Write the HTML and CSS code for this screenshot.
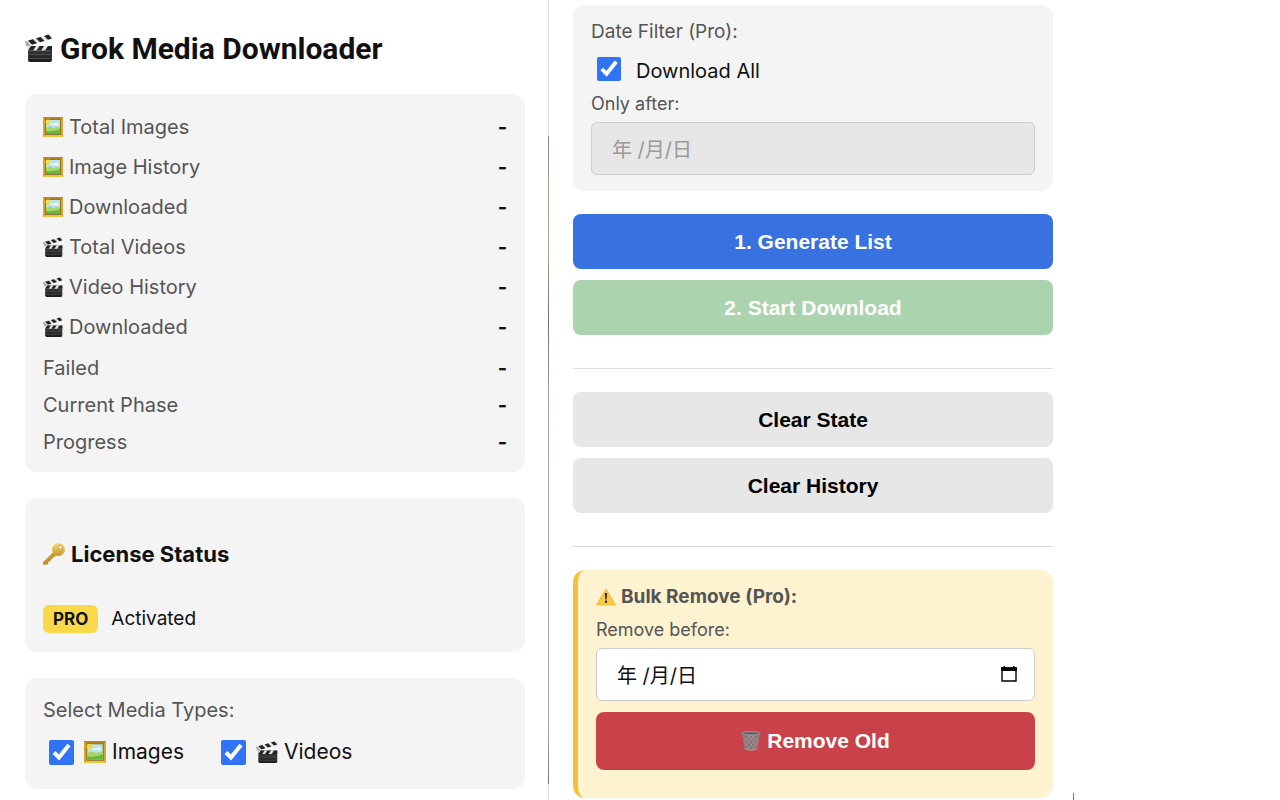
FILE: index.html
```html
<!DOCTYPE html>
<html lang="en">
<head>
  <meta charset="UTF-8">
  <title>Grok Media Downloader</title>
  <link rel="stylesheet" href="styles.css">
</head>
<body>
  <!-- shared icons -->
  <svg class="sprite" aria-hidden="true">
    <defs>
      <linearGradient id="gold" x1="0" y1="0" x2="0" y2="1">
        <stop offset="0" stop-color="#f6dc6a"/>
        <stop offset="1" stop-color="#c99a2c"/>
      </linearGradient>
      <linearGradient id="slate" x1="0" y1="0" x2="0" y2="1">
        <stop offset="0" stop-color="#444"/>
        <stop offset="1" stop-color="#1c1c1c"/>
      </linearGradient>
    </defs>
    <symbol id="clapper" viewBox="0 0 28 28">
      <path d="M0 7.500 25.500 0 27 4.500 1.500 12.500z" fill="#e4e4e4"/>
      <path d="M3 6.600 8 5.200 12 9.200 7 10.800zM11 4.300 15.500 3 19.500 6.900 15 8.300zM19 2 23.500 .6 27 4.500 23 5.800z" fill="#222"/>
      <path d="M0 7.500 2 7 5.500 12 1.500 12.500z" fill="#aaa"/>
      <path d="M3 12H27V26Q27 28 25 28H5Q3 28 3 26z" fill="url(#slate)"/>
      <path d="M3 12H27L25.500 16.500H3z" fill="#e4e4e4"/>
      <path d="M6 12H11L8 16.500H3zM14.500 12H19L16 16.500H11.500zM23 12H27V16.500H20z" fill="#222"/>
      <path d="M3 20.500H27M3 24.500H27" stroke="#5a5a5a" stroke-width=".7"/>
    </symbol>
    <symbol id="frame" viewBox="0 0 20 20">
      <path d="M0 0H20V20H0z" fill="#dba520"/>
      <path d="M0 0H20L17.500 2.500H2.500z" fill="#b98222"/>
      <path d="M0 20H20L17.500 17.500H2.500z" fill="#f0c63a"/>
      <path d="M2 2H18V18H2z" fill="#8b7437"/>
      <path d="M3 3H17V17H3z" fill="#bce4ed"/>
      <circle cx="5" cy="5" r="2.500" fill="#f4dc3e"/>
      <path d="M7 8Q9 5.500 11 7.500 14 5 16 8z" fill="#fff"/>
      <path d="M3 11Q7 8 11 11 14 9 17 10V17H3z" fill="#a6d66c"/>
      <path d="M3 14Q11 15 17 12V17H3z" fill="#69b83e"/>
    </symbol>
    <symbol id="key" viewBox="0 0 22 22">
      <path d="M10.500 9 13.500 12 5 19.500 4.500 21.500 2 22 0 21.500V19z" fill="#c79a31"/>
      <path d="M3 18.500 5 20.500M5.500 16.500 7.500 18.500" stroke="#916b1d" stroke-width="1"/>
      <circle cx="15.500" cy="6.500" r="6.400" fill="url(#gold)"/>
      <circle cx="17.500" cy="4.300" r="1.900" fill="#f4f4f4" stroke="#a98329" stroke-width=".6"/>
    </symbol>
    <symbol id="warning" viewBox="0 0 20 17">
      <path d="M10 .8 19.200 16.200H.8z" fill="#f8cc46" stroke="#f0bd35" stroke-width="1.200" stroke-linejoin="round"/>
      <path d="M8.900 4.500H11.100L10.600 11H9.400z" fill="#222"/>
      <circle cx="10" cy="13.300" r="1.200" fill="#222"/>
    </symbol>
    <symbol id="trash" viewBox="0 0 20 20">
      <path d="M1 2H19L16.500 18Q10 20.500 3.500 18z" fill="#85777a"/>
      <path d="M2 5 14.500 19M6 4 16.500 15M10 4 17.500 11M2.500 10 9 19M18 5 5.500 19M14 4 3.500 15M10 4 2.500 11M17.500 10 11 19" stroke="#b5969a" stroke-width=".7" fill="none"/>
      <ellipse cx="10" cy="2.300" rx="9.500" ry="1.800" fill="#666" stroke="#a5a0a0" stroke-width=".8"/>
      <path d="M3.500 18Q10 20.500 16.500 18" fill="none" stroke="#9d9a9a"/>
    </symbol>
    <symbol id="calendar" viewBox="0 0 16 16">
      <path d="M1 2H15V15H1z" fill="none" stroke="#000" stroke-width="1.400"/>
      <path d="M.2 1.200H15.800V5H.2zM2.500 0H4V2H2.500zM12 0H13.500V2H12z"/>
    </symbol>
  </svg>

  <main class="layout">
    <div class="panel panel-left">
      <h1><svg class="icon-lg"><use href="#clapper"/></svg>Grok Media Downloader</h1>

      <section class="card stats">
        <div class="group">
          <div class="stat"><span><svg class="icon"><use href="#frame"/></svg>Total Images</span><b>-</b></div>
          <div class="stat"><span><svg class="icon"><use href="#frame"/></svg>Image History</span><b>-</b></div>
          <div class="stat"><span><svg class="icon"><use href="#frame"/></svg>Downloaded</span><b>-</b></div>
          <div class="stat"><span><svg class="icon"><use href="#clapper"/></svg>Total Videos</span><b>-</b></div>
          <div class="stat"><span><svg class="icon"><use href="#clapper"/></svg>Video History</span><b>-</b></div>
          <div class="stat"><span><svg class="icon"><use href="#clapper"/></svg>Downloaded</span><b>-</b></div>
        </div>
        <div class="group compact">
          <div class="stat"><span>Failed</span><b>-</b></div>
          <div class="stat"><span>Current Phase</span><b>-</b></div>
          <div class="stat"><span>Progress</span><b>-</b></div>
        </div>
      </section>

      <section class="card license">
        <h2><svg class="icon-md"><use href="#key"/></svg>License Status</h2>
        <div class="status"><span class="badge">PRO</span><span>Activated</span></div>
      </section>

      <section class="card media">
        <div class="media-title">Select Media Types:</div>
        <div class="checks">
          <label><input type="checkbox" class="check" checked><svg class="icon-md"><use href="#frame"/></svg>Images</label>
          <label><input type="checkbox" class="check" checked><svg class="icon-md"><use href="#clapper"/></svg>Videos</label>
        </div>
      </section>
    </div>

    <div class="panel panel-right">
      <section class="card filter">
        <div class="field-label filter-title">Date Filter (Pro):</div>
        <label class="all"><input type="checkbox" class="check" checked><span>Download All</span></label>
        <label class="field-label" for="after">Only after:</label>
        <div class="date"><input type="text" id="after" value="年 /月/日" disabled></div>
      </section>

      <div class="actions">
        <button class="btn primary">1. Generate List</button>
        <button class="btn success" disabled>2. Start Download</button>
      </div>
      <hr>
      <div class="actions">
        <button class="btn">Clear State</button>
        <button class="btn">Clear History</button>
      </div>
      <hr>

      <section class="card bulk">
        <div class="field-label bulk-title"><svg class="icon"><use href="#warning"/></svg>Bulk Remove (Pro):</div>
        <label class="field-label" for="before">Remove before:</label>
        <div class="date">
          <input type="text" id="before" value="年 /月/日">
          <button class="picker" aria-label="Open calendar"><svg><use href="#calendar"/></svg></button>
        </div>
        <button class="btn danger"><svg class="icon"><use href="#trash"/></svg>Remove Old</button>
      </section>
    </div>
  </main>
</body>
</html>
```

FILE: styles.css
```css
* { box-sizing: border-box; }
body { margin: 0; background: #fff; color: #111; font-family: Inter, "Noto Sans CJK SC", sans-serif; font-size: 20px; }
.sprite { position: absolute; width: 0; height: 0; }
.layout { display: grid; grid-template-columns: 549fr 525fr 206fr; min-height: 100vh; }

.panel { position: relative; }
.panel-left { padding: 24px 24px 10px 25px; }
.panel-left::after { content: ""; position: absolute; top: 0; right: 0; bottom: 0; width: 1px; background: linear-gradient(#ddd 17%, #8d8a80 17%, #b0a890 30%, #707070 40%, #b09a94 50%, #aaa 60%, #aaa 90%, #777 98%, #ddd 98%); }
.panel-right { padding: 5px 21px 2px 24px; }
.panel-right::after { content: ""; position: absolute; right: 0; bottom: 0; width: 1px; height: 7px; background: #777; }

h1 { display: flex; align-items: center; gap: 7px; margin: 0 0 20px; font-size: 30px; line-height: 50px; font-family: Roboto, sans-serif; }
h1 .icon-lg { margin-bottom: 3px; }
h2 { display: flex; align-items: center; gap: 6px; margin: 0; font-size: 22px; line-height: 32px; }
.icon { width: 20px; height: 20px; flex: none; }
.icon-md { width: 22px; height: 22px; flex: none; }
.icon-lg { width: 28px; height: 28px; flex: none; }

.card { background: #f4f4f4; border-radius: 12px; padding: 13px 18px 12px; }
.panel-left .card + .card { margin-top: 26px; }
.stat { display: flex; justify-content: space-between; align-items: center; height: 40px; color: #555; }
.stat span { display: flex; align-items: center; gap: 6px; }
.stat b { color: #111; }
.compact { margin-top: 2px; }
.compact .stat { height: 37px; }

.license { padding: 40px 18px 19px; }
.status { display: flex; align-items: center; gap: 13px; margin-top: 35px; font-size: 19px; line-height: 28px; }
.badge { background: #f9d949; border-radius: 6px; padding: 0 10px; font-size: 17px; font-weight: bold; }

.media { padding: 18px 18px 23px; }
.media-title { color: #555; line-height: 28px; }
.checks { display: flex; gap: 37px; margin-top: 14px; padding-left: 6px; font-size: 21px; }
.checks label { display: flex; align-items: center; gap: 6px; line-height: 28px; }
.checks .check { margin-right: 4px; }
.check { width: 25px; height: 25px; margin: 0; accent-color: #3074f5; }

.filter { padding: 14px 18px 16px; margin-bottom: 23px; }
.field-label { display: block; color: #555; font-size: 18px; line-height: 26px; }
.filter-title { font-size: 19px; }
.all { display: flex; align-items: center; gap: 15px; height: 40px; margin-top: 6px; padding-left: 6px; }
.all .check { width: 24px; height: 24px; margin-bottom: 5px; }
.date { position: relative; margin-top: 5px; }
.date input { display: block; width: 100%; height: 53px; padding: 0 20px; border: 1px solid #ccc; border-radius: 6px; background: #fff; color: #111; font: 20px Inter, "Noto Sans CJK SC", sans-serif; }
.date input:disabled { background: #e7e7e7; color: #999; }
.picker { position: absolute; right: 18px; top: 18px; width: 16px; height: 16px; padding: 0; border: 0; background: none; }
.picker svg { display: block; width: 16px; height: 16px; }

.actions { display: grid; gap: 11px; }
.btn { display: flex; align-items: center; justify-content: center; gap: 6px; width: 100%; height: 55px; border: 0; border-radius: 8px; background: #e7e7e7; color: #000; font: bold 21px "Liberation Sans", sans-serif; }
.primary { background: #3871e0; color: #fff; }
.success { background: #aad3ae; color: #fff; }
.danger { height: 58px; margin-top: 11px; background: #ca4249; color: #fff; }
hr { margin: 33px 0 23px; border: 0; border-top: 1px solid #ddd; }

.bulk { padding: 14px 18px 28px; background: #fdf3d1; border-left: 5px solid #f8c03a; }
.bulk-title { display: flex; align-items: center; gap: 5px; margin-bottom: 7px; font-size: 19px; font-weight: bold; }
```
